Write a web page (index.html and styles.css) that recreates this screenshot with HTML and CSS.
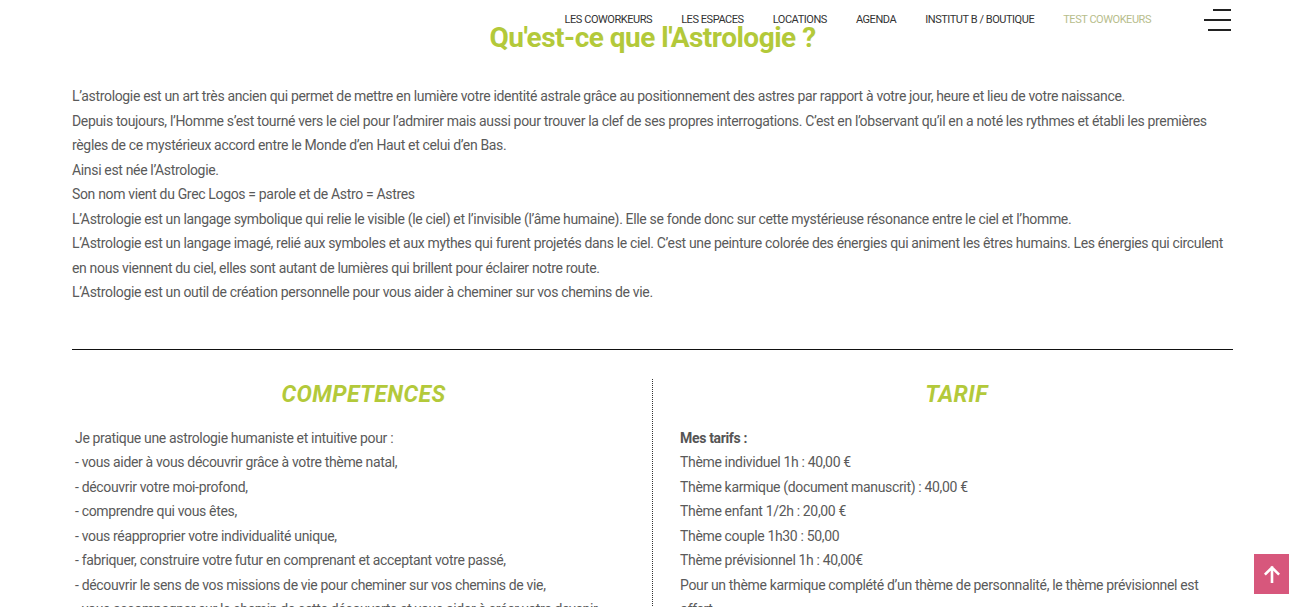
FILE: index.html
```html
<!DOCTYPE html>
<html lang="fr">
<head>
<meta charset="utf-8">
<title>Qu'est-ce que l'Astrologie ?</title>
<link rel="stylesheet" href="styles.css">
</head>
<body>
<header class="site-header">
  <nav class="main-nav">
    <a href="#">LES COWORKEURS</a>
    <a href="#">LES ESPACES</a>
    <a href="#">LOCATIONS</a>
    <a href="#">AGENDA</a>
    <a href="#">INSTITUT B / BOUTIQUE</a>
    <a href="#" class="active">TEST COWOKEURS</a>
  </nav>
  <button class="burger" aria-label="menu">
    <span class="l1"></span><span class="l2"></span><span class="l3"></span>
  </button>
</header>

<main class="page">
  <h1 class="title">Qu'est-ce que l'Astrologie ?</h1>
  <div class="intro">
    <p>L’astrologie est un art très ancien qui permet de mettre en lumière votre identité astrale grâce au positionnement des astres par rapport à votre jour, heure et lieu de votre naissance.<br>
    Depuis toujours, l’Homme s’est tourné vers le ciel pour l’admirer mais aussi pour trouver la clef de ses propres interrogations. C’est en l’observant qu’il en a noté les rythmes et établi les premières règles de ce mystérieux accord entre le Monde d’en Haut et celui d’en Bas.<br>
    Ainsi est née l’Astrologie.<br>
    Son nom vient du Grec Logos = parole et de Astro = Astres<br>
    L’Astrologie est un langage symbolique qui relie le visible (le ciel) et l’invisible (l’âme humaine). Elle se fonde donc sur cette mystérieuse résonance entre le ciel et l’homme.<br>
    L’Astrologie est un langage imagé, relié aux symboles et aux mythes qui furent projetés dans le ciel. C’est une peinture colorée des énergies qui animent les êtres humains. Les énergies qui circulent en nous viennent du ciel, elles sont autant de lumières qui brillent pour éclairer notre route.<br>
    L’Astrologie est un outil de création personnelle pour vous aider à cheminer sur vos chemins de vie.</p>
  </div>
  <hr class="sep">
  <section class="cols">
    <div class="col col-left">
      <h2 class="col-title">COMPETENCES</h2>
      <p>Je pratique une astrologie humaniste et intuitive pour :<br>
      - vous aider à vous découvrir grâce à votre thème natal,<br>
      - découvrir votre moi-profond,<br>
      - comprendre qui vous êtes,<br>
      - vous réapproprier votre individualité unique,<br>
      - fabriquer, construire votre futur en comprenant et acceptant votre passé,<br>
      - découvrir le sens de vos missions de vie pour cheminer sur vos chemins de vie,<br>
      - vous accompagner sur le chemin de cette découverte et vous aider à créer votre devenir.</p>
    </div>
    <div class="col col-right">
      <h2 class="col-title">TARIF</h2>
      <p><strong>Mes tarifs :</strong><br>
      Thème individuel 1h : 40,00 €<br>
      Thème karmique (document manuscrit) : 40,00 €<br>
      Thème enfant 1/2h : 20,00 €<br>
      Thème couple 1h30 : 50,00<br>
      Thème prévisionnel 1h : 40,00€<br>
      Pour un thème karmique complété d’un thème de personnalité, le thème prévisionnel est offert.</p>
    </div>
  </section>
</main>

<a href="#" class="to-top" aria-label="haut de page">
  <svg width="16" height="18" viewBox="0 0 16 18"><path d="M8 2.5 L8 17 M1.8 8.7 L8 2.5 L14.2 8.7" fill="none" stroke="#fff" stroke-width="2.6" stroke-linecap="square"/></svg>
</a>
</body>
</html>
```
FILE: styles.css
```css
html, body {
  margin: 0;
  padding: 0;
  background: #fff;
}
body {
  font-family: "Roboto", "Liberation Sans", sans-serif;
  color: #5a5a5a;
  overflow: hidden;
}
.site-header {
  position: absolute;
  top: 0;
  left: 0;
  right: 0;
  height: 38px;
  display: flex;
  justify-content: flex-end;
  align-items: center;
  padding-right: 68px;
  z-index: 5;
}
.main-nav {
  display: flex;
  gap: 29px;
  margin-right: 53px;
}
.main-nav a {
  font-size: 11px;
  color: #333;
  text-decoration: none;
  letter-spacing: -0.45px;
}
.main-nav a.active {
  color: #b7bd8c;
}
.burger {
  width: 27px;
  height: 22px;
  border: 0;
  padding: 0;
  background: transparent;
  display: flex;
  flex-direction: column;
  justify-content: space-between;
  align-items: flex-end;
  margin-top: 1px;
}
.burger span {
  display: block;
  height: 2px;
  background: #222;
}
.burger .l1 { width: 18px; }
.burger .l2 { width: 27px; }
.burger .l3 { width: 23px; }

.page {
  width: 1161px;
  margin-left: 72px;
}
.title {
  margin: 20px 0 0;
  text-align: center;
  font-size: 28px;
  line-height: 36px;
  font-weight: bold;
  letter-spacing: -0.5px;
  color: #b3c93a;
}
.intro {
  margin-top: 28px;
}
.intro p, .col p {
  margin: 0;
  font-size: 14px;
  line-height: 24.5px;
  letter-spacing: -0.34px;
}
.sep {
  margin: 44px 0 0;
  border: 0;
  border-top: 1px solid #111;
  height: 0;
}
.cols {
  display: grid;
  grid-template-columns: 581px 1fr;
  margin-top: 29px;
}
.col-left {
  padding-left: 3px;
  border-right: 1px dotted #333;
}
.col-right {
  padding-left: 27px;
}
.col-right p {
  padding-right: 28px;
}
.col-title {
  margin: 4px 0 19px;
  text-align: center;
  font-size: 23px;
  line-height: 24px;
  font-style: italic;
  font-weight: bold;
  letter-spacing: 0.4px;
  color: #b3c93a;
}
.col p strong {
  color: #555;
}
.to-top {
  position: fixed;
  right: 10px;
  bottom: 13px;
  width: 35px;
  height: 40px;
  background: #d7577c;
  display: flex;
  align-items: center;
  justify-content: center;
}
```
